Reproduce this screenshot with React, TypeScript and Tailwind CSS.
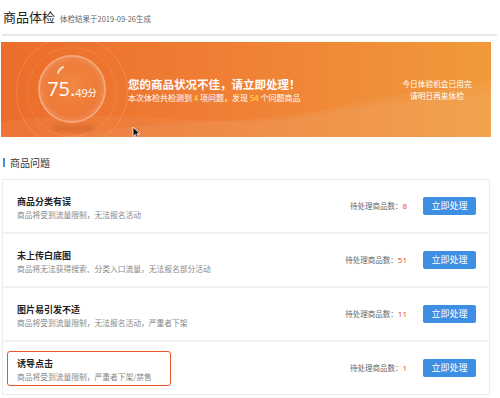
const problems = [
  { title: "商品分类有误", desc: "商品将受到流量限制，无法报名活动", count: 8 },
  { title: "未上传白底图", desc: "商品将无法获得搜索、分类入口流量，无法报名部分活动", count: 51 },
  { title: "图片易引发不适", desc: "商品将受到流量限制，无法报名活动，严重者下架", count: 11 },
  { title: "诱导点击", desc: "商品将受到流量限制，严重者下架/禁售", count: 1, active: true },
];

function ScoreBall() {
  return (
    <div className="relative w-[110px] h-[95px] shrink-0">
      {/* outer faint ring */}
      <div className="absolute left-[-2px] top-[-6px] w-[112px] h-[112px] rounded-full border border-white/15" />
      <div className="absolute left-[9px] top-[5px] w-[90px] h-[90px] rounded-full border border-white/10" />
      {/* shadow */}
      <div className="absolute left-[36px] top-[84px] w-[40px] h-[5px] rounded-full bg-[#b9521c]/40 blur-[2px]" />
      {/* ball */}
      <div className="absolute left-[20px] top-[13px] w-[68px] h-[68px] rounded-full border-[2px] border-[#f5a77c] bg-[radial-gradient(circle_at_50%_45%,#f08843_0%,#ee7734_70%,#f29560_100%)] shadow-[inset_0_0_8px_rgba(255,255,255,0.25)]">
        <svg className="absolute left-[16px] top-[8px]" width="10" height="10" viewBox="0 0 10 10">
          <path d="M2 8 Q3 4 7 2" stroke="white" strokeOpacity="0.7" strokeWidth="2" fill="none" strokeLinecap="round" />
        </svg>
        <div className="absolute inset-0 flex items-center justify-center text-white">
          <span className="text-[20px] leading-none font-['Open_Sans','Noto_Sans',sans-serif]">75</span>
          <span className="text-[20px] leading-none font-['Open_Sans',sans-serif]">.</span>
          <span className="text-[11px] leading-none mt-[7px] font-['Open_Sans',sans-serif]">49</span>
          <span className="text-[9px] leading-none mt-[7px]">分</span>
        </div>
      </div>
    </div>
  );
}

export default function App() {
  return (
    <div className="w-[500px] h-[398px] bg-white overflow-hidden font-['Noto_Sans_CJK_SC','Noto_Sans',sans-serif] text-[#333]">
      {/* header */}
      <div className="flex items-baseline pl-[3px] pt-[8px] h-[34px]">
        <span className="text-[13px] leading-[18px] text-[#222]">商品体检</span>
        <span className="ml-[5px] text-[7.5px] text-[#666]">体检结果于2019-09-26生成</span>
      </div>
      <div className="ml-[2px] mr-[3px] h-[2px] bg-[#e8e8e8]" />

      {/* banner */}
      <div className="relative mt-[6px] ml-[1px] w-[490px] h-[95px] overflow-hidden bg-[linear-gradient(90deg,#ec6d2b_0%,#ef7f34_45%,#f19a3c_100%)]">
        <svg className="absolute inset-0" width="490" height="95" viewBox="0 0 490 95">
          <path d="M0 80 C120 60 220 95 330 70 C400 55 450 60 490 50 L490 95 L0 95 Z" fill="white" fillOpacity="0.05" />
          <path d="M60 95 C160 75 260 85 350 62 C420 45 460 48 490 40 L490 95 Z" fill="white" fillOpacity="0.05" />
        </svg>
        <div className="relative flex items-center h-full pl-[17px]">
          <ScoreBall />
          <div className="flex flex-col text-white">
            <span className="text-[11.5px] leading-[14px] font-bold">您的商品状况不佳，请立即处理！</span>
            <span className="mt-[2px] text-[8px] leading-[10px]">
              本次体检共检测到 <span className="text-[#ffe23a]">4</span> 项问题，发现{" "}
              <span className="text-[#ffe23a]">54</span> 个问题商品
            </span>
          </div>
          <div className="ml-auto w-[100px] mr-[4px] flex flex-col items-center text-white text-[7.7px] leading-[12px]">
            <span>今日体验机会已用完</span>
            <span>请明日再来体检</span>
          </div>
        </div>
        {/* mouse cursor */}
        <svg className="absolute left-[131px] top-[84px]" width="9" height="13" viewBox="0 0 9 13">
          <path d="M1 1 L1 10.5 L3.3 8.4 L5 12 L6.5 11.3 L4.9 7.8 L8 7.8 Z" fill="#111" stroke="white" strokeWidth="0.8" />
        </svg>
      </div>

      {/* section title */}
      <div className="flex items-center mt-[19px] pl-[3px] h-[13px]">
        <div className="w-[2px] h-[9px] bg-[#3a8ee6]" />
        <span className="ml-[5px] text-[10px] leading-[13px] text-[#333]">商品问题</span>
      </div>

      {/* problem list */}
      <div className="mt-[10px] ml-[2px] w-[488px] border border-[#ececec] flex flex-col gap-[2px] bg-[#f2f2f2]">
        {problems.map((p) => (
          <div key={p.title} className="flex items-center h-[52px] bg-white pl-[4px] pr-[13px]">
            <div
              className={`w-[164px] h-[35px] rounded-[3px] border-[1.5px] pl-[9px] pt-[6px] ${
                p.active ? "border-[#e8542a]" : "border-transparent"
              }`}
            >
              <div className="text-[9px] leading-[12px] font-bold text-[#222]">{p.title}</div>
              <div className="mt-[2px] text-[7.75px] leading-[10px] text-[#888] whitespace-nowrap">{p.desc}</div>
            </div>
            <div className="ml-auto flex items-center text-[7.5px] text-[#666]">
              <span>待处理商品数：</span>
              <span className="text-[#f03a2e] text-[8px] font-['Open_Sans',sans-serif]">{p.count}</span>
            </div>
            <button className="ml-[16px] w-[53px] h-[18px] rounded-[2px] bg-[#3d8fe3] text-white text-[9px] leading-[18px]">
              立即处理
            </button>
          </div>
        ))}
      </div>
    </div>
  );
}
